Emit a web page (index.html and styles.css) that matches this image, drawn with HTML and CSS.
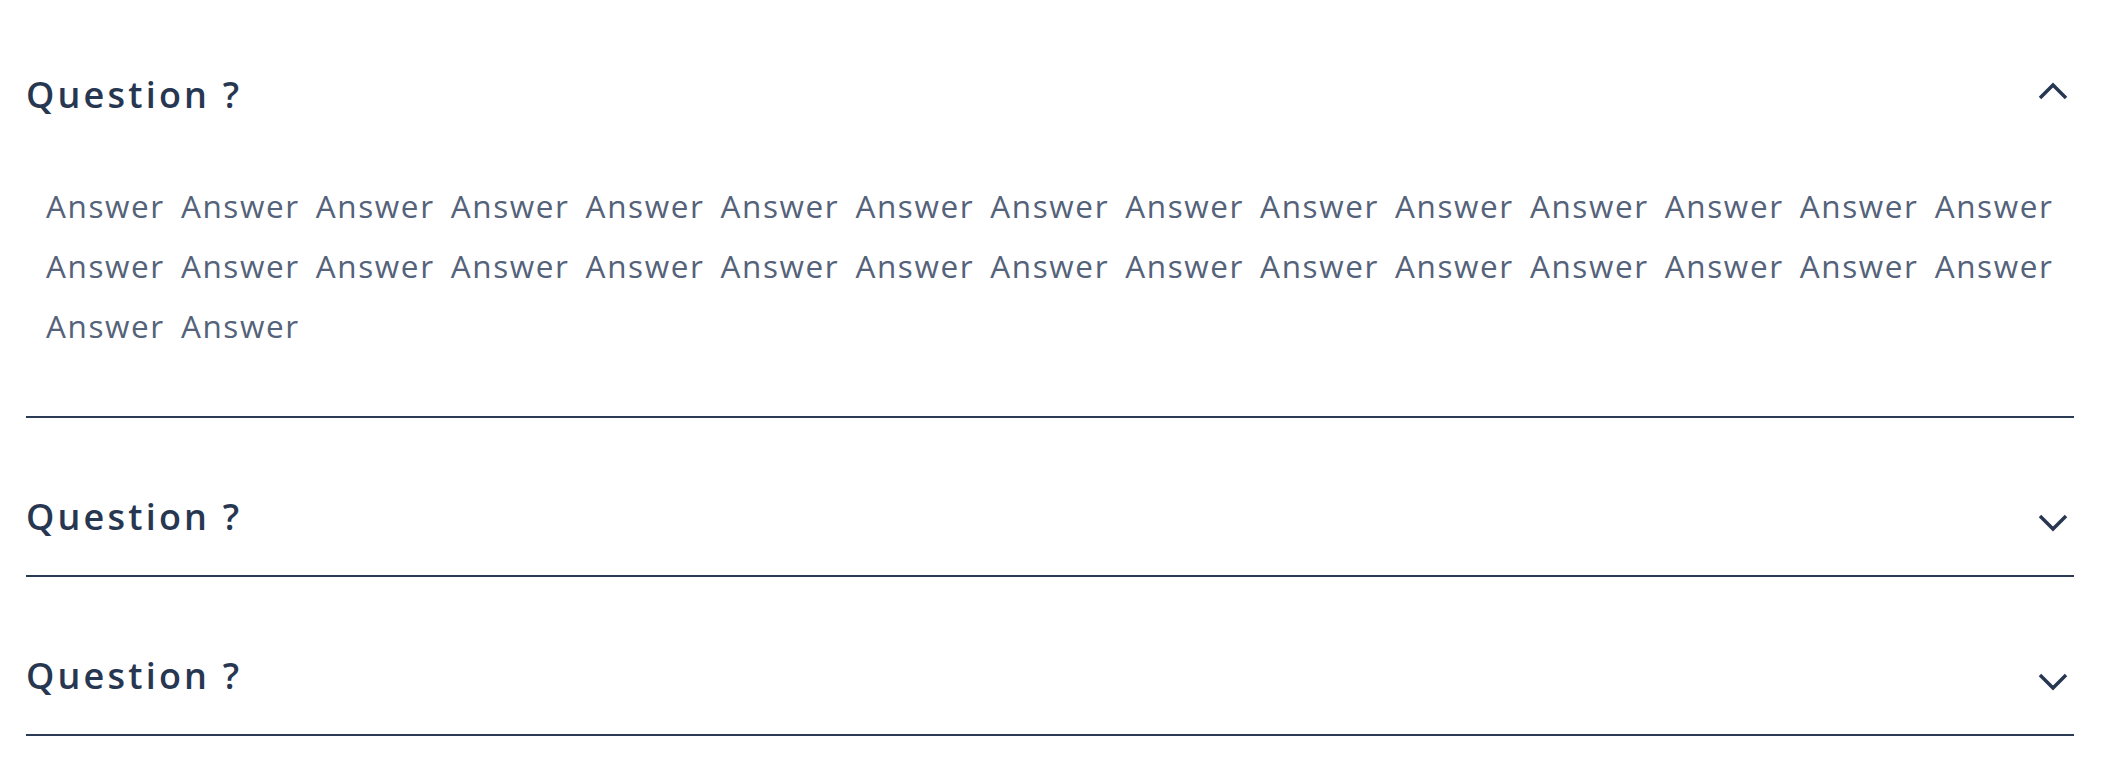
FILE: index.html
```html
<!DOCTYPE html>
<html lang="en">
<head>
<meta charset="utf-8">
<title>FAQ</title>
<link rel="stylesheet" href="styles.css">
</head>
<body>
<div class="faq">
  <div class="item item-open">
    <div class="question">
      <span class="q-text">Question ?</span>
      <svg class="chev chev-up" width="30" height="18" viewBox="0 0 30 18"><polyline points="2,16 15,3 28,16" fill="none" stroke="#283751" stroke-width="3.5"/></svg>
    </div>
    <div class="answer">Answer Answer Answer Answer Answer Answer Answer Answer Answer Answer Answer Answer Answer Answer Answer Answer Answer Answer Answer Answer Answer Answer Answer Answer Answer Answer Answer Answer Answer Answer Answer Answer</div>
  </div>
  <div class="item">
    <div class="question">
      <span class="q-text">Question ?</span>
      <svg class="chev chev-down" width="30" height="18" viewBox="0 0 30 18"><polyline points="2,2 15,15 28,2" fill="none" stroke="#283751" stroke-width="3.5"/></svg>
    </div>
  </div>
  <div class="item">
    <div class="question">
      <span class="q-text">Question ?</span>
      <svg class="chev chev-down" width="30" height="18" viewBox="0 0 30 18"><polyline points="2,2 15,15 28,2" fill="none" stroke="#283751" stroke-width="3.5"/></svg>
    </div>
  </div>
</div>
</body>
</html>
```
FILE: styles.css
```css
html, body {
  margin: 0;
  padding: 0;
  background: #ffffff;
}

.faq {
  margin-left: 26px;
  width: 2048px;
  font-family: "Open Sans", "Noto Sans", sans-serif;
}

.item {
  border-bottom: 2px solid #2b3a55;
}

.question {
  display: flex;
  justify-content: space-between;
  align-items: flex-start;
  padding: 75px 6px 34px 0;
}

.item:first-child .question {
  padding-top: 71px;
}

.q-text {
  font-size: 36px;
  line-height: 48px;
  font-weight: 600;
  letter-spacing: 3.2px;
  color: #283751;
}

.chev {
  display: block;
}

.chev-up {
  margin-top: 11px;
}

.chev-down {
  margin-top: 21px;
}

.answer {
  padding: 23px 0 60px 20px;
  font-size: 31.5px;
  line-height: 60px;
  letter-spacing: 1.6px;
  word-spacing: 6.3px;
  color: #54627a;
}
```
